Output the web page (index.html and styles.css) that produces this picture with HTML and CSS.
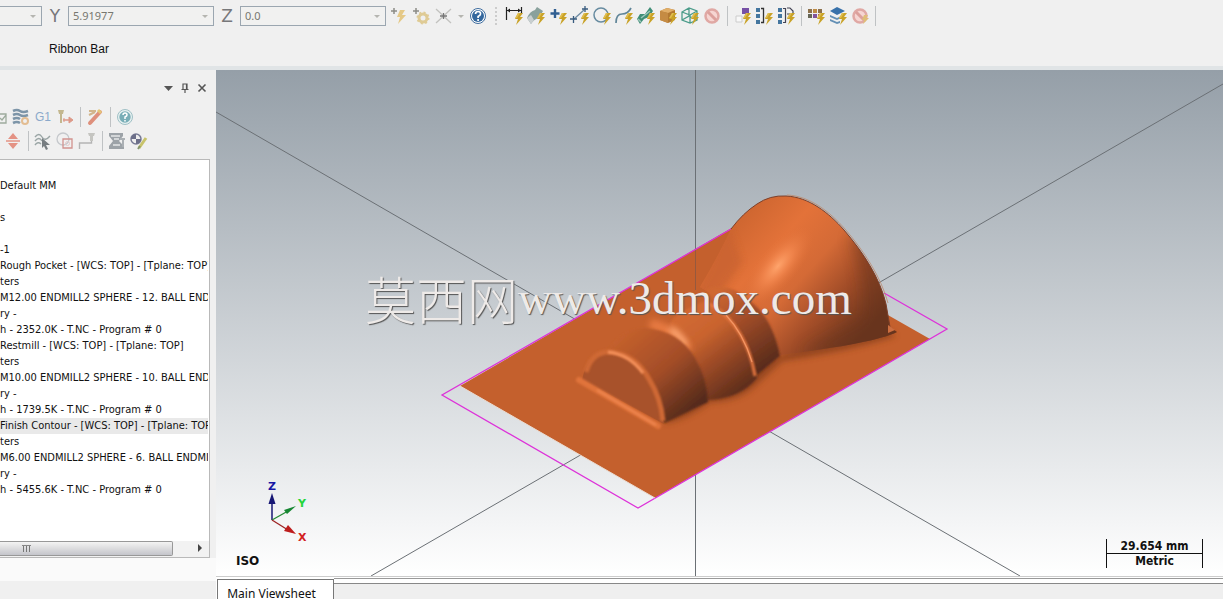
FILE: index.html
```
<!DOCTYPE html>
<html lang="en">
<head>
<meta charset="utf-8">
<title>Main Viewsheet</title>
<link rel="stylesheet" href="styles.css">
</head>
<body>
<svg class="defs" aria-hidden="true">
  <symbol id="bolt" viewBox="0 0 22 22"><path d="M15 8h5l-3 4h3l-7 8 2-6h-3z" fill="#c9a227"/><path d="M15 8h2l-3 5h-2z" fill="#e0bd4e"/></symbol>
  <symbol id="ban" viewBox="0 0 22 22"><circle cx="11" cy="11" r="6.500" fill="#f6d5d2" stroke="#e0a8a4" stroke-width="2.500"/><path d="M7 7l8 8" stroke="#dca09c" stroke-width="3"/></symbol>
  <symbol id="caret" viewBox="0 0 8 5"><path d="M1 1h6L4 4z" fill="#b5b5b0"/></symbol>
</svg>

<header class="ribbon">
  <div class="coords">
    <div class="combo combo-x"><input class="combo-input" type="text" aria-label="X"><button class="combo-drop" aria-label="X list"><svg width="8" height="5"><use href="#caret"/></svg></button></div>
    <label class="axis" for="coord-y">Y</label>
    <div class="combo"><input class="combo-input" id="coord-y" type="text" value="5.91977"><button class="combo-drop" aria-label="Y list"><svg width="8" height="5"><use href="#caret"/></svg></button></div>
    <label class="axis" for="coord-z">Z</label>
    <div class="combo"><input class="combo-input" id="coord-z" type="text" value="0.0"><button class="combo-drop" aria-label="Z list"><svg width="8" height="5"><use href="#caret"/></svg></button></div>
    <div class="tools">
      <button class="tool" aria-label="Fast point"><svg viewBox="0 0 22 22"><path d="M5 3v6M2 6h6" stroke="#8c8c86" stroke-width="1.500"/><path d="M11 5h5l-3 5h4l-8 9 2-7H8z" fill="#e5c987"/></svg></button>
      <button class="tool" aria-label="AutoCursor settings"><svg viewBox="0 0 22 22"><path d="M5 3v6M2 6h6" stroke="#8c8c86" stroke-width="1.500"/><circle cx="12" cy="13" r="4" fill="none" stroke="#dfcb95" stroke-width="3"/><circle cx="12" cy="13" r="5.500" fill="none" stroke="#dfcb95" stroke-width="2" stroke-dasharray="2 2.300"/></svg></button>
      <button class="tool" aria-label="AutoCursor"><svg viewBox="0 0 22 22"><path d="M3 4l15 14M18 4L3 18" stroke="#c2c2bf" stroke-width="1.300"/><path d="M10.500 8v6M7 11h7" stroke="#777" stroke-width="1.300"/></svg></button>
      <button class="tool tool-drop" aria-label="AutoCursor list"><svg class="mini" width="8" height="5"><use href="#caret"/></svg></button>
      <button class="tool" aria-label="Help"><svg viewBox="0 0 22 22"><circle cx="11" cy="11" r="7.500" fill="#fff" stroke="#3d6c9e" stroke-width="1"/><circle cx="11" cy="11" r="6" fill="#34689e"/><path d="M8.500 9q0-2.500 2.600-2.500T13.500 9q0 1.400-2.400 2.500v1.500M11.100 14v2" fill="none" stroke="#fff" stroke-width="1.700"/></svg></button>
      <span class="handle"></span>
      <button class="tool" aria-label="Drafting"><svg viewBox="0 0 22 22"><path d="M3.500 2v13M18.500 2v7M4 5.500h14" stroke="#222" stroke-width="1.200" fill="none"/><path d="M4 5.500l3-2v4zM18 5.500l-3-2v4z" fill="#222"/><use href="#bolt"/></svg></button>
      <button class="tool" aria-label="Surface"><svg viewBox="0 0 22 22"><path d="M2 13q3-7 8-8l2-3 6 4-4 7q-5 1-8 6z" fill="#89a19c"/><path d="M2 13l4 6 3-4-3-5z" fill="#c9cfd0"/><use href="#bolt"/></svg></button>
      <button class="tool" aria-label="Points"><svg viewBox="0 0 22 22"><path d="M8 4v9M3.500 8.500h9" stroke="#315f91" stroke-width="2.400"/><use href="#bolt"/></svg></button>
      <button class="tool" aria-label="Lines"><svg viewBox="0 0 22 22"><path d="M5 14L15 5" stroke="#6d8ba3" stroke-width="1.300"/><path d="M1 14h7M4.500 11v7M13 4h6M16 1v6" stroke="#385b7e" stroke-width="1.300"/><use href="#bolt"/></svg></button>
      <button class="tool" aria-label="Arcs"><svg viewBox="0 0 22 22"><circle cx="10" cy="10" r="7" fill="none" stroke="#678ba0" stroke-width="1.500"/><use href="#bolt"/></svg></button>
      <button class="tool" aria-label="Splines"><svg viewBox="0 0 22 22"><path d="M3 18Q3 9 9 9t9-6" fill="none" stroke="#618699" stroke-width="1.700"/><use href="#bolt"/></svg></button>
      <button class="tool" aria-label="Sheet"><svg viewBox="0 0 22 22"><path d="M2 14l3-5 5 0 5-7 3 4-4 6-5 2-4 5z" fill="#3f8e76"/><path d="M3 14l3 3M6 13l9-7" stroke="#9dc6ba" stroke-width="1.500"/><use href="#bolt"/></svg></button>
      <button class="tool" aria-label="Solid"><svg viewBox="0 0 22 22"><path d="M3 6l7-3 8 2v10l-7 3-8-3z" fill="#b37931"/><path d="M3 6l7-3 8 2-7 3z" fill="#e1ae68"/><path d="M3 6l8 2v10l-8-3z" fill="#c58b43"/><use href="#bolt"/></svg></button>
      <button class="tool" aria-label="Wireframe"><svg viewBox="0 0 22 22"><path d="M3 7l7-4 8 3v9l-7 3-8-3zM3 7l8 3 7-4M11 10v8M10 3v8L3 15M10 11l8 4" fill="none" stroke="#4b9c8a" stroke-width="1.300"/><use href="#bolt"/></svg></button>
      <button class="tool" aria-label="Clear types"><svg viewBox="0 0 22 22"><use href="#ban"/></svg></button>
      <span class="rule"></span>
      <button class="tool" aria-label="By color"><svg viewBox="0 0 22 22"><path d="M11 3h7v6h-7z" fill="#7650a5"/><path d="M5 11h6v6H5z" fill="#f8f8f8" stroke="#ccc"/><use href="#bolt"/></svg></button>
      <button class="tool" aria-label="Group"><svg viewBox="0 0 22 22"><path d="M3 3h4v4H3zM3 9h4v4H3zM3 15h4v4H3z" fill="#44769f"/><path d="M8 3.500h2.500v14H8" fill="none" stroke="#333" stroke-width="1.300"/><use href="#bolt"/></svg></button>
      <button class="tool" aria-label="Result"><svg viewBox="0 0 22 22"><path d="M3 3h4v4H3zM3 9h4v4H3zM3 15h4v4H3z" fill="#44769f"/><path d="M8 3.500h2.500v14H8M12 3h3l3 3v3h-6" fill="none" stroke="#445" stroke-width="1.200"/><use href="#bolt"/></svg></button>
      <span class="rule"></span>
      <button class="tool" aria-label="Colors"><svg viewBox="0 0 22 22"><path d="M3 4h4v4H3zM13 4h4v4h-4z" fill="#8d714c"/><path d="M8 4h4v4H8z" fill="#bd8b45"/><path d="M3 9h4v4H3z" fill="#665"/><path d="M8 9h4v4H8z" fill="#83549b"/><path d="M13 9h4v3h-4z" fill="#b36a55"/><use href="#bolt"/></svg></button>
      <button class="tool" aria-label="Levels"><svg viewBox="0 0 22 22"><path d="M3 6l7-4 8 4-8 4z" fill="#3871aa"/><path d="M3 10l7 3 6-3v2l-6 3-7-3zM3 14l7 3 3-1v2l-3 1-7-3z" fill="#6490b5"/><use href="#bolt"/></svg></button>
      <button class="tool" aria-label="Clear masks"><svg viewBox="0 0 22 22"><use href="#ban"/><path d="M15 10h4l-2 3h3l-6 6 1-4h-2z" fill="#dfbd77"/></svg></button>
      <span class="rule"></span>
    </div>
  </div>
  <div class="ribbon-name">Ribbon Bar</div>
</header>

<main class="workspace">
  <aside class="manager">
    <div class="pane-title">
      <button class="pane-btn" aria-label="Menu"><svg viewBox="0 0 12 12"><path d="M2 4h9L6.500 9z" fill="#555"/></svg></button>
      <button class="pane-btn" aria-label="Pin"><svg viewBox="0 0 12 12"><path d="M4 7V2h4v5M2.500 7.500h7M6 8v3M7.500 2v5" fill="none" stroke="#555" stroke-width="1.200"/></svg></button>
      <button class="pane-btn" aria-label="Close"><svg viewBox="0 0 12 12"><path d="M2.500 2.500l7 7M9.500 2.500l-7 7" stroke="#555" stroke-width="1.600"/></svg></button>
    </div>
    <div class="op-tools op-tools-top">
      <button class="tool tool-cut" aria-label="Verify"><svg viewBox="0 0 10 22"><path d="M0 8h6v9H0M0 12l2 2 4-5" fill="none" stroke="#9dab9d" stroke-width="1.300"/></svg></button>
      <button class="tool" aria-label="Simulate"><svg viewBox="0 0 22 22"><path d="M3 5q4-2 7 0t8 0M3 9q4-2 7 0t8 0M3 13q4-2 7 0M3 17q4-2 7 0" fill="none" stroke="#7d95a8" stroke-width="2.600"/><circle cx="15" cy="15" r="3" fill="none" stroke="#e3bd92" stroke-width="2"/></svg></button>
      <button class="tool tool-g1">G1</button>
      <button class="tool" aria-label="Feeds"><svg viewBox="0 0 22 22"><path d="M4 4h6l-1 4H5zM6 8h2v9H6z" fill="#c3b78f"/><path d="M9 14h6" stroke="#dd9988" stroke-width="1.500"/><path d="M10 12v4M15 11l4 3-4 3z" fill="#dd9988" stroke="#dd9988"/></svg></button>
      <span class="rule"></span>
      <button class="tool" aria-label="Tool manager"><svg viewBox="0 0 22 22"><path d="M6 17L16 6" stroke="#de907c" stroke-width="4" stroke-linecap="round"/><path d="M5 5h7M5 9l6-3" stroke="#d2b58b" stroke-width="2"/><path d="M14 4l3 3" stroke="#e4c577" stroke-width="3"/></svg></button>
      <span class="rule"></span>
      <button class="tool" aria-label="Help"><svg viewBox="0 0 22 22"><circle cx="11" cy="11" r="7.500" fill="#e8f1f1" stroke="#9fc0c5"/><circle cx="11" cy="11" r="5.700" fill="#79aeb7"/><path d="M9 9q0-2 2-2t2 2q0 1-2 2v2M11 14v1.500" fill="none" stroke="#fff" stroke-width="1.500"/></svg></button>
    </div>
    <div class="op-tools op-tools-low">
      <button class="tool" aria-label="Insert arrow"><svg viewBox="0 0 22 22"><path d="M11 3l5 6H6zM11 19l5-6H6zM4 10.200h14v1.600H4z" fill="#e49284"/></svg></button>
      <span class="rule"></span>
      <button class="tool" aria-label="Toolpath display"><svg viewBox="0 0 22 22"><path d="M3 7q4-5 7 0t8-1M3 11q4-5 7 0M3 15q3-4 6-1" fill="none" stroke="#9aa5a5" stroke-width="1.400"/><path d="M10 8l8 7-4 0 2 4-2 1-2-4-2 2z" fill="#777d81"/></svg></button>
      <button class="tool" aria-label="Geometry"><svg viewBox="0 0 22 22"><circle cx="9" cy="9" r="6" fill="none" stroke="#c5c8cc" stroke-width="1.300"/><path d="M9 9h9v9H9z" fill="none" stroke="#d1928e" stroke-width="1.300"/><circle cx="13.500" cy="13.500" r="2" fill="none" stroke="#e5c9c8"/></svg></button>
      <button class="tool" aria-label="Rapid moves"><svg viewBox="0 0 22 22"><path d="M3.500 19v-6h12v-3" fill="none" stroke="#b4b4b4" stroke-width="1.400"/><path d="M12 3h7l-1 3h-1v5h-3V6h-1z" fill="#c5c5c1"/></svg></button>
      <span class="rule"></span>
      <button class="tool" aria-label="Machine"><svg viewBox="0 0 22 22"><path d="M3 3h14v3l-4 5 5 5v3H3v-3l4-5-4-5z" fill="#9da3a8"/><path d="M5 6h9M8 9h5M7 15h7" stroke="#e5e7e8" stroke-width="1.400"/><path d="M14 9h5M17 9v8" stroke="#abb0b4" stroke-width="2"/></svg></button>
      <button class="tool" aria-label="Edit origin"><svg viewBox="0 0 22 22"><circle cx="8" cy="9" r="5" fill="#eee" stroke="#777a94" stroke-width="1.500"/><path d="M8 9V4a5 5 0 0 0-5 5zM8 9v5a5 5 0 0 0 5-5z" fill="#6c6f89"/><path d="M11 18l7-10" stroke="#c8c36b" stroke-width="3"/><path d="M10 19l2-3" stroke="#85956e" stroke-width="2"/></svg></button>
    </div>
    <div class="tree">
      <ul class="rows">
        <li class="row">Default MM</li>
        <li class="row"></li>
        <li class="row">s</li>
        <li class="row"></li>
        <li class="row">-1</li>
        <li class="row">Rough Pocket - [WCS: TOP] - [Tplane: TOP]</li>
        <li class="row">ters</li>
        <li class="row">M12.00 ENDMILL2 SPHERE - 12. BALL ENDMILL</li>
        <li class="row">ry -</li>
        <li class="row">h - 2352.0K - T.NC - Program # 0</li>
        <li class="row">Restmill - [WCS: TOP] - [Tplane: TOP]</li>
        <li class="row">ters</li>
        <li class="row">M10.00 ENDMILL2 SPHERE - 10. BALL ENDMILL</li>
        <li class="row">ry -</li>
        <li class="row">h - 1739.5K - T.NC - Program # 0</li>
        <li class="row row-active">Finish Contour - [WCS: TOP] - [Tplane: TOP]</li>
        <li class="row">ters</li>
        <li class="row">M6.00 ENDMILL2 SPHERE - 6. BALL ENDMILL</li>
        <li class="row">ry -</li>
        <li class="row">h - 5455.6K - T.NC - Program # 0</li>
      </ul>
      <div class="scroll">
        <div class="thumb"><svg width="10" height="8"><path d="M1.500 0v7M4.500 0v7M7.500 0v7" stroke="#777"/><path d="M0 .5h9" stroke="#888"/></svg></div>
        <button class="scroll-end" aria-label="Scroll right"><svg width="6" height="8"><path d="M1 0l4 4-4 4z" fill="#444"/></svg></button>
      </div>
    </div>
    <div class="pane-foot"></div>
  </aside>

  <section class="stage">
    <div class="viewport">
      <svg class="scene" viewBox="216 70 1007 506" preserveAspectRatio="none" role="img" aria-label="Model in isometric view">
        <defs>
          <linearGradient id="bell" gradientUnits="userSpaceOnUse" x1="738" y1="225" x2="862" y2="336"><stop offset="0" stop-color="#d06731"/><stop offset=".25" stop-color="#e37239"/><stop offset=".5" stop-color="#d46a36"/><stop offset=".73" stop-color="#a24d28"/><stop offset="1" stop-color="#67341e"/></linearGradient>
          <linearGradient id="neck" gradientUnits="userSpaceOnUse" x1="720" y1="290" x2="773" y2="365"><stop offset="0" stop-color="#cf6832"/><stop offset=".35" stop-color="#a9502a"/><stop offset="1" stop-color="#54291a"/></linearGradient>
          <linearGradient id="mid" gradientUnits="userSpaceOnUse" x1="675" y1="318" x2="738" y2="400"><stop offset="0" stop-color="#d26932"/><stop offset=".3" stop-color="#c9642f"/><stop offset=".55" stop-color="#a04c27"/><stop offset="1" stop-color="#54291a"/></linearGradient>
          <linearGradient id="front" gradientUnits="userSpaceOnUse" x1="623" y1="335" x2="692" y2="415"><stop offset="0" stop-color="#c4602d"/><stop offset=".5" stop-color="#a34d28"/><stop offset="1" stop-color="#4e271a"/></linearGradient>
          <radialGradient id="shine"><stop offset="0" stop-color="#ffa46c"/><stop offset=".4" stop-color="#f58a51" stop-opacity=".75"/><stop offset="1" stop-color="#e37239" stop-opacity="0"/></radialGradient>
          <filter id="soft1" x="-20%" y="-20%" width="140%" height="140%"><feGaussianBlur stdDeviation="1"/></filter>
          <filter id="soft3" x="-40%" y="-40%" width="180%" height="180%"><feGaussianBlur stdDeviation="3"/></filter>
          <filter id="soft7" x="-40%" y="-40%" width="180%" height="180%"><feGaussianBlur stdDeviation="7"/></filter>
          <clipPath id="bell-clip"><path d="M731 229Q743 213 757 204Q770 195 786 196C809 197 829 213 844 230C863 252 880 278 886 304L890 327L897 332Q875 343 781 355Q763 338 740 310L700 287Q718 257 731 229z"/></clipPath>
        </defs>
        <path d="M695.500 70V576M216 112L1020 576M1223 84L371 576" stroke="#6b7075" stroke-width="1" fill="none"/>
        <path d="M460 386L735 226L800 265L930 339L655 498z" fill="#c4602d"/>
        <path d="M695.500 249V290" stroke="#96593e"/>
        <path d="M884 293L947 329L638 508L442 395L731 229" fill="none" stroke="#dd32d9" stroke-width="1.300"/>
        <path d="M460 386L655 498" stroke="#eadbd0" stroke-width="1"/>

        <path d="M664 424Q690 418 710 402Q740 402 758 383L782 361Q850 351 896 336L870 320L680 395z" fill="#743518" opacity=".6" filter="url(#soft3)"/>
        <g clip-path="url(#bell-clip)">
          <path d="M690 190H900V360H690z" fill="url(#bell)"/>
          <path d="M725 215Q715 264 695 292L712 306L742 262z" fill="#ca6430" opacity=".8" filter="url(#soft3)"/>
          <path d="M850 235Q868 290 862 318L800 352L900 355V250z" fill="#6b351f" opacity=".5" filter="url(#soft7)"/>
          <ellipse cx="778" cy="266" rx="20" ry="50" transform="rotate(40 778 266)" fill="url(#shine)"/>
          <path d="M710 300Q745 288 765 330" fill="none" stroke="#b3562c" stroke-width="5" filter="url(#soft3)"/>
        </g>
        <path d="M731 229Q743 213 757 204Q770 195 786 196C809 197 829 213 844 230C863 252 880 278 886 304L890 327" fill="none" stroke="#7d402a" stroke-width="1"/>
        <path d="M786 196C809 197 829 213 844 230C863 252 880 278 887 304" fill="none" stroke="#bc8a6e" stroke-width=".8" transform="translate(1 -1)"/>
        <path d="M888 325l7 5-7 3z" fill="#cc6e40"/>

        <path d="M706 289Q728 282 746 298Q772 315 780 356L757 375L735 330z" fill="url(#neck)" filter="url(#soft1)"/>
        <path d="M705 301Q724 306 737 326Q752 346 757 378Q740 399 707 400L673 330Q660 319 705 301z" fill="url(#mid)" filter="url(#soft1)"/>
        <path d="M709 304Q728 314 740 334Q751 352 755 376" fill="none" stroke="#e4763f" stroke-width="3" filter="url(#soft1)"/>
        <path d="M726 315Q743 333 752 362" fill="none" stroke="#f49664" stroke-width="1.200"/>
        <path d="M650 324Q672 328 688 352" fill="none" stroke="#e87a42" stroke-width="10" filter="url(#soft3)"/>
        <path d="M670 329Q679 334 686 346" fill="none" stroke="#ffab78" stroke-width="6" filter="url(#soft3)"/>

        <path d="M608 350Q622 329 645 328Q680 331 695 358Q707 378 708 402L665 423L625 400z" fill="url(#front)" filter="url(#soft1)"/>
        <path d="M582 380Q587 352 612 351Q640 356 658 397L664 424z" fill="#a8522b"/>
        <path d="M586 372Q592 351 611 352Q635 354 649 379Q661 398 663 421" fill="none" stroke="#cf6934" stroke-width="5" filter="url(#soft1)"/>
        <path d="M608 352Q629 354 643 373" fill="none" stroke="#f6925c" stroke-width="3" filter="url(#soft1)"/>
        <path d="M579 380L658 426" stroke="#e0733b" stroke-width="6" stroke-linecap="round" filter="url(#soft1)"/>
        <path d="M597 390L656 425" stroke="#f18953" stroke-width="2" filter="url(#soft1)"/>

        <path d="M272 520V496" stroke="#171775" stroke-width="1.500"/><path d="M268.500 504L272 493l3.500 11z" fill="#171775"/>
        <path d="M272 520L288 511" stroke="#258b35" stroke-width="1.300"/><path d="M284 510l12-4-9 8z" fill="#168632"/>
        <path d="M272 520L288 530" stroke="#9c2222" stroke-width="1.300"/><path d="M284 531l4-6 8 9z" fill="#bd1d1d"/>
      </svg>
      <div class="watermark"><span class="mark-cjk" lang="zh">莫西网</span><span class="mark-url">www.3dmox.com</span></div>
      <div class="triad"><span class="ax-z">Z</span><span class="ax-y">Y</span><span class="ax-x">X</span></div>
      <div class="view-name">ISO</div>
      <div class="scale"><div class="scale-top">29.654 mm</div><div class="scale-low">Metric</div></div>
    </div>
    <div class="sheets"><button class="sheet">Main Viewsheet</button><div class="sheet-rest"></div></div>
  </section>
</main>
</body>
</html>
```

FILE: styles.css
```
* { box-sizing: border-box; }
body {
  margin: 0;
  height: 100vh;
  overflow: hidden;
  display: flex;
  flex-direction: column;
  background: #f0f0f0;
  color: #111;
  font: 11px/16px "DejaVu Sans Condensed", "Noto Sans", sans-serif;
}
button { border: 0; padding: 0; background: none; color: inherit; font: inherit; }
.defs { position: absolute; width: 0; height: 0; }

.ribbon { flex: none; height: 70px; border-bottom: 4px solid #e0e4e6; }
.coords { display: flex; align-items: center; height: 32px; }
.combo {
  flex: none;
  display: flex;
  align-items: center;
  width: 146px;
  height: 20px;
  border: 1px solid #9ba6b0;
  background: #f1f1f0;
}
.combo-x { width: 42px; border-left: 0; }
.combo-input {
  flex: 1;
  min-width: 0;
  border: 0;
  padding: 0 4px;
  background: none;
  color: #77776f;
  font: 11px/16px "Noto Sans", sans-serif;
}
.combo-drop { display: flex; width: 12px; }
.axis {
  flex: none;
  width: 26px;
  text-align: center;
  color: #77777a;
  font: 17px/20px "DejaVu Sans", sans-serif;
}
.tools { display: flex; align-items: center; padding-left: 3px; }
.tool { flex: none; display: flex; width: 22px; height: 22px; }
.tool svg { width: 100%; height: 100%; }
.tool-drop { width: 12px; align-items: center; justify-content: center; }
.tool .mini { width: 8px; height: 5px; }
.tool-cut { width: 10px; }
.tool-g1 { align-items: center; justify-content: center; color: #8ba9cb; font: 12px/22px "Liberation Sans", sans-serif; }
.handle { width: 14px; height: 18px; background: radial-gradient(circle, #ccc 1px, transparent 1px) center / 14px 4px; }
.rule { flex: none; width: 8px; height: 20px; background: linear-gradient(#bfc2c4, #bfc2c4) center / 1px 100% no-repeat; }
.ribbon-name { padding-left: 49px; line-height: 34px; color: #111; font-family: "Liberation Sans", sans-serif; font-size: 12px; }

.workspace { flex: 1; min-height: 0; display: flex; }
.manager { flex: none; width: 216px; display: flex; flex-direction: column; overflow: hidden; }
.pane-title { display: flex; justify-content: flex-end; gap: 5px; padding: 12px 8px 0 0; }
.pane-btn { display: flex; width: 12px; height: 12px; }
.op-tools { display: flex; align-items: center; height: 25px; }
.op-tools-top { margin-top: 10px; }
.op-tools-low { height: 24px; padding-left: 2px; }
.tree {
  flex: 1;
  min-height: 0;
  display: flex;
  flex-direction: column;
  justify-content: space-between;
  margin: 6px 6px 0 0;
  border: 1px solid #b9b9b9;
  border-left: 0;
  background: #fff;
}
.rows { list-style: none; margin: 0; padding: 18px 1px 0 0; }
.row { height: 16px; overflow: hidden; white-space: nowrap; }
.row-active { background: #e9e9e9; }
.scroll { display: flex; justify-content: space-between; height: 16px; background: #f2f2f2; }
.thumb {
  width: 173px;
  height: 15px;
  padding: 3px 0 0 22px;
  border: 1px solid #989898;
  border-left: 0;
  border-radius: 0 2px 2px 0;
  background: linear-gradient(#f3f3f3, #dcdcde 50%, #c4c5cb);
}
.thumb svg { display: block; }
.scroll-end { width: 18px; }
.pane-foot { flex: none; height: 41px; padding-bottom: 18px; background: #fafafa content-box; }

.stage { flex: 1; min-width: 0; display: flex; flex-direction: column; background: #fff; }
.viewport { position: relative; flex: 1; min-height: 0; background: linear-gradient(#959fa8, #fff); border-bottom: 1px solid #ccc; }
.scene { display: block; width: 100%; height: 100%; }
.watermark {
  position: absolute;
  left: 149px;
  top: 196px;
  display: flex;
  align-items: center;
  height: 64px;
  color: #eeeae8;
  white-space: nowrap;
  text-shadow: 1px 1px 1px #555;
}
.mark-cjk { font: 300 51px/60px "Noto Sans CJK SC", sans-serif; }
.mark-url { font: 47px/64px "Liberation Serif", serif; }
.triad span { position: absolute; font: bold 11px/14px "DejaVu Sans", sans-serif; }
.ax-z { left: 52px; top: 410px; color: #1717a5; }
.ax-y { left: 82px; top: 427px; color: #24d53a; }
.ax-x { left: 82px; top: 461px; color: #d32222; }
.view-name { position: absolute; left: 20px; bottom: 7px; font: bold 12px/16px "DejaVu Sans", sans-serif; }
.scale {
  position: absolute;
  right: 20px;
  bottom: 8px;
  width: 97px;
  border: solid #111;
  border-width: 0 1px;
  text-align: center;
  font: bold 12px/14px "DejaVu Sans Condensed", sans-serif;
}
.scale-top { border-bottom: 1px solid #111; }

.sheets { flex: none; display: flex; height: 22px; padding-top: 2px; }
.sheet {
  width: 117px;
  margin-left: 1px;
  padding: 6px 8px 0 0;
  overflow: hidden;
  border: 1px solid #777;
  border-bottom: 0;
  background: #fff;
  font: 12px/16px "Noto Sans", sans-serif;
}
.sheet-rest { flex: 1; margin-top: 4px; border-top: 1px solid #888; background: #efefef; box-shadow: 0 -4px 0 #fff, 0 -5px 0 #999; }
```
